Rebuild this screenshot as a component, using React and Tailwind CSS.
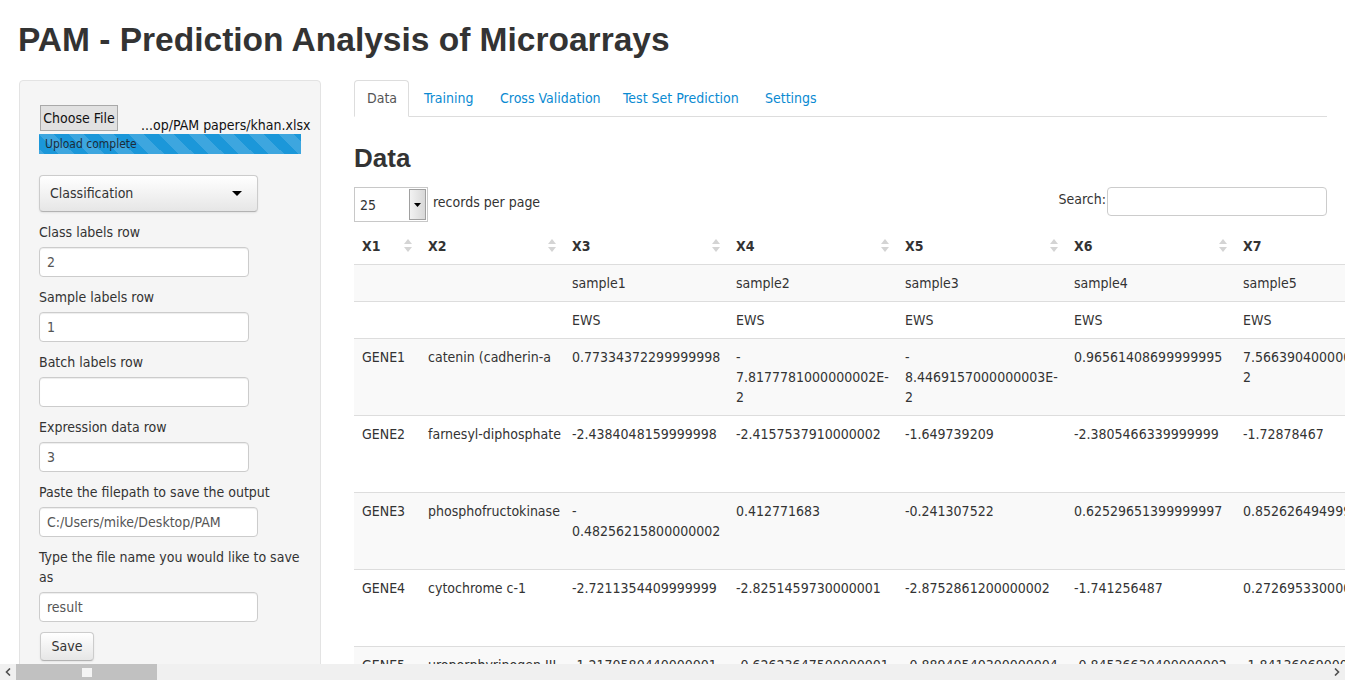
import React from "react";

const COLS = [66, 144, 164, 169, 169, 169, 169];

const ROWS = [
  { bg: "bg-[#f9f9f9]", h: "h-[36px]", border: false, cells: ["", "", "sample1", "sample2", "sample3", "sample4", "sample5"] },
  { bg: "bg-white", h: "h-[37px]", border: true, cells: ["", "", "EWS", "EWS", "EWS", "EWS", "EWS"] },
  {
    bg: "bg-[#f9f9f9]", h: "h-[77px]", border: true,
    cells: ["GENE1", "catenin (cadherin-a", "0.77334372299999998", ["-", "7.8177781000000002E-", "2"], ["-", "8.4469157000000003E-", "2"], "0.96561408699999995", ["7.5663904000000002E-", "2"]],
  },
  {
    bg: "bg-white", h: "h-[77px]", border: true,
    cells: ["GENE2", "farnesyl-diphosphate", "-2.4384048159999998", "-2.4157537910000002", "-1.649739209", "-2.3805466339999999", "-1.72878467"],
  },
  {
    bg: "bg-[#f9f9f9]", h: "h-[77px]", border: true,
    cells: ["GENE3", "phosphofructokinase", ["-", "0.48256215800000002"], "0.412771683", "-0.241307522", "0.62529651399999997", "0.85262649499999996"],
  },
  {
    bg: "bg-white", h: "h-[77px]", border: true,
    cells: ["GENE4", "cytochrome c-1", "-2.7211354409999999", "-2.8251459730000001", "-2.8752861200000002", "-1.741256487", "0.27269533000000001"],
  },
  {
    bg: "bg-[#f9f9f9]", h: "h-[77px]", border: true,
    cells: ["GENE5", "uroporphyrinogen III", "-1.2170580440000001", "-0.62623647500000001", "-0.88940540300000004", "-0.84536630400000002", "-1.8413606900000001"],
  },
];

function SortIcon() {
  return (
    <svg width="8" height="14" viewBox="0 0 8 14" className="shrink-0">
      <polygon points="4,0 8,5 0,5" fill="#d4d4d4" />
      <polygon points="0,8 8,8 4,13" fill="#d4d4d4" />
    </svg>
  );
}

function Field({ label, value, wide, twoLine }) {
  return (
    <div className="mt-[10px]">
      <div className="leading-[20px] whitespace-nowrap">
        {twoLine ? (
          <>
            Type the file name you would like to save
            <br />
            as
          </>
        ) : (
          label
        )}
      </div>
      <div
        className={
          (wide ? "w-[219px] " : "w-[210px] ") +
          "mt-[5px] h-[30px] bg-white border border-[#cccccc] rounded-[4px] shadow-[inset_0_1px_1px_rgba(0,0,0,0.075)] px-[7px] flex items-center text-[#555] leading-[20px]"
        }
      >
        {value}
      </div>
    </div>
  );
}

function Sidebar() {
  return (
    <div className="w-[302px] shrink-0 h-[620px] bg-[#f5f5f5] border border-[#e3e3e3] rounded-[4px] px-[19px] pt-[24px]">
      <div className="flex items-start h-[26px]">
        <div className="w-[78px] h-[26px] ml-px border border-[#a9a9a9] bg-[#e1e1e1] flex items-center justify-center text-[14px] text-[#111] whitespace-nowrap shrink-0">
          Choose File
        </div>
        <div className="ml-[23px] mt-[12px] leading-[16px] text-[#111] whitespace-nowrap">...op/PAM papers/khan.xlsx</div>
      </div>
      <div className="mt-[3px] w-[262px] h-[20px] bg-[#1b97d9] bg-[linear-gradient(45deg,rgba(255,255,255,0.15)_25%,transparent_25%,transparent_50%,rgba(255,255,255,0.15)_50%,rgba(255,255,255,0.15)_75%,transparent_75%,transparent)] bg-[length:30px_30px] flex items-center pl-[6px] text-[12px] text-[#1d2d3a] whitespace-nowrap">
        Upload complete
      </div>
      <div className="mt-[21px] w-[219px] h-[37px] rounded-[4px] border border-[#cccccc] border-b-[#b3b3b3] bg-[linear-gradient(to_bottom,#ffffff,#e6e6e6)] shadow-[0_1px_2px_rgba(0,0,0,0.08)] flex items-center justify-between pl-[10px] pr-[15px]">
        <span>Classification</span>
        <svg width="10" height="5" viewBox="0 0 10 5">
          <polygon points="0,0 10,0 5,5" fill="#000" />
        </svg>
      </div>
      <div className="mt-[2px]">
        <Field label="Class labels row" value="2" />
        <Field label="Sample labels row" value="1" />
        <Field label="Batch labels row" value="" />
        <Field label="Expression data row" value="3" />
        <Field label="Paste the filepath to save the output" value="C:/Users/mike/Desktop/PAM" wide />
        <Field twoLine value="result" wide />
      </div>
      <div className="mt-[10px] w-[54px] h-[29px] ml-px rounded-[4px] border border-[#cccccc] border-b-[#b3b3b3] bg-[linear-gradient(to_bottom,#ffffff,#e6e6e6)] shadow-[0_1px_2px_rgba(0,0,0,0.08)] flex items-center justify-center">
        Save
      </div>
    </div>
  );
}

function Tabs() {
  const tabs = [
    { t: "Training", w: "w-[74px]" },
    { t: "Cross Validation", w: "w-[121px]" },
    { t: "Test Set Prediction", w: "w-[140px]" },
    { t: "Settings", w: "w-[75px]" },
  ];
  return (
    <div className="flex items-end h-[37px] border-b border-[#dddddd]">
      <div className="w-[55px] h-[37px] -mb-px mr-[2px] border border-[#dddddd] border-b-white bg-white rounded-t-[4px] pl-[12px] flex items-center text-[#555]">
        Data
      </div>
      {tabs.map((x) => (
        <div key={x.t} className={x.w + " h-[36px] mr-[2px] pl-[13px] flex items-center text-[#0a8ad2] whitespace-nowrap"}>
          {x.t}
        </div>
      ))}
    </div>
  );
}

function Cell({ w, children, head, last }) {
  const lines = Array.isArray(children) ? children : [children];
  return (
    <div style={{ width: w }} className="shrink-0 px-[8px] py-[8px] leading-[20px] whitespace-nowrap">
      {head ? (
        <div className="flex items-center justify-between">
          <span className="font-bold text-[#333]">{children}</span>
          {!last && <SortIcon />}
        </div>
      ) : (
        lines.map((l, i) => <div key={i}>{l}</div>)
      )}
    </div>
  );
}

function Main() {
  const heads = ["X1", "X2", "X3", "X4", "X5", "X6", "X7"];
  return (
    <div className="w-[973px] shrink-0">
      <Tabs />
      <h3 className="mt-[26px] h-[30px] leading-[30px] text-[26px] font-bold font-['Liberation_Sans',sans-serif] text-[#333]">Data</h3>
      <div className="mt-[14px] flex items-start justify-between">
        <div className="flex items-center">
          <div className="w-[74px] h-[35px] bg-white border border-[#c8c8c8] flex items-stretch">
            <div className="flex-1 flex items-center pl-[5px] pt-[2px] text-[#333]">25</div>
            <div className="w-[17px] my-px mr-px border border-[#a0a0a0] bg-[linear-gradient(to_right,#f2f2f2,#d8d8d8)] flex items-center justify-center">
              <svg width="7" height="4" viewBox="0 0 7 4">
                <polygon points="0,0 7,0 3.5,4" fill="#000" />
              </svg>
            </div>
          </div>
          <span className="ml-[5px] -mt-[4px]">records per page</span>
        </div>
        <div className="flex items-center">
          <span className="-mt-[4px]">Search:</span>
          <div className="ml-px w-[220px] h-[29px] bg-white border border-[#cccccc] rounded-[4px]" />
        </div>
      </div>
      <div className="mt-[6px] w-[1050px]">
        <div className="flex h-[37px] border-b border-[#dddddd]">
          {heads.map((h, i) => (
            <Cell key={h} w={COLS[i]} head last={i === 6}>
              {h}
            </Cell>
          ))}
        </div>
        {ROWS.map((r, ri) => (
          <div key={ri} className={"flex " + r.h + " " + r.bg + (r.border ? " border-t border-[#dddddd]" : "")}>
            {r.cells.map((c, ci) => (
              <Cell key={ci} w={COLS[ci]}>
                {c}
              </Cell>
            ))}
          </div>
        ))}
      </div>
    </div>
  );
}

function Scrollbar() {
  return (
    <div className="h-[16px] shrink-0 bg-[#f0f0f0] flex items-stretch">
      <div className="w-[16px] flex items-center justify-center">
        <svg width="6" height="8" viewBox="0 0 6 8">
          <polyline points="5,0.5 1.5,4 5,7.5" fill="none" stroke="#505050" strokeWidth="1.6" />
        </svg>
      </div>
      <div className="w-[141px] bg-[#c1c1c1] flex items-center justify-center">
        <div className="w-[10px] h-[9px] bg-[#f4f4f4]" />
      </div>
      <div className="flex-1" />
      <div className="w-[16px] flex items-center justify-center">
        <svg width="6" height="8" viewBox="0 0 6 8">
          <polyline points="1,0.5 4.5,4 1,7.5" fill="none" stroke="#505050" strokeWidth="1.6" />
        </svg>
      </div>
    </div>
  );
}

export default function App() {
  return (
    <div className="w-[1345px] h-[680px] overflow-hidden flex flex-col bg-white text-[#333] text-[14px] font-['DejaVu_Sans_Condensed','Liberation_Sans',sans-serif]">
      <div className="flex-1 min-h-0 overflow-hidden pl-[19px]">
        <h1 className="mt-[20px] h-[40px] leading-[40px] text-[33.5px] font-bold font-['Liberation_Sans',sans-serif] text-[#333] whitespace-nowrap -ml-px">
          PAM - Prediction Analysis of Microarrays
        </h1>
        <div className="mt-[20px] flex items-start gap-[33px]">
          <Sidebar />
          <Main />
        </div>
      </div>
      <Scrollbar />
    </div>
  );
}
